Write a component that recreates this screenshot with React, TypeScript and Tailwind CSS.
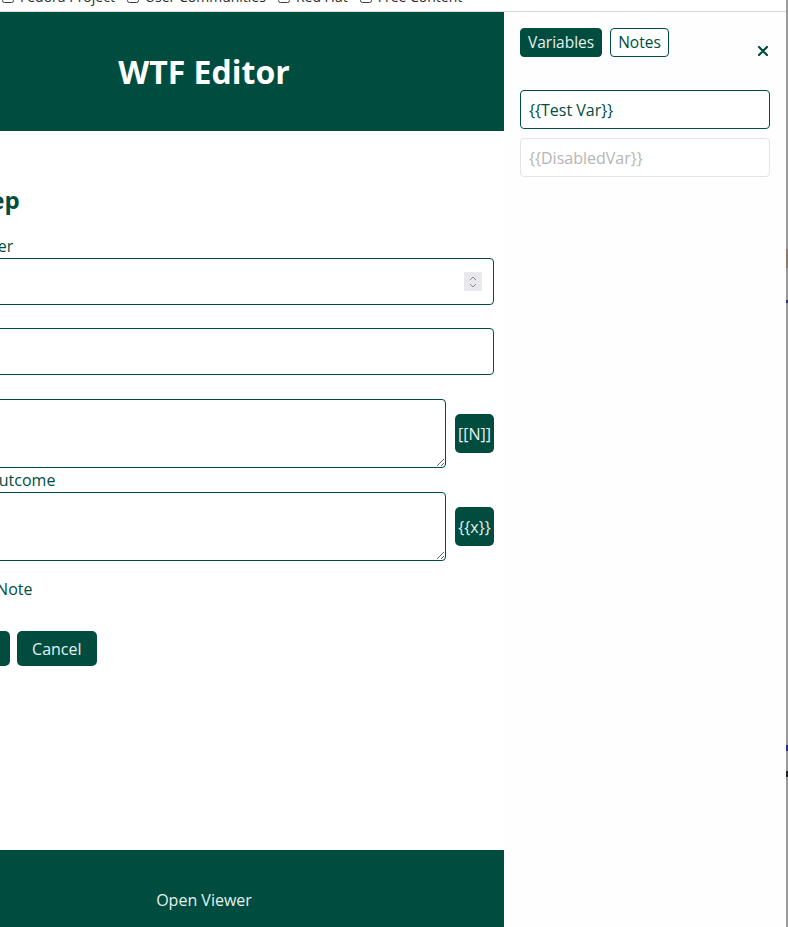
import React, { useState } from 'react';

const GREEN = '#004d40';

const Bookmark: React.FC<{ label: string }> = ({ label }) => (
  <div className="flex items-center gap-[6px] shrink-0">
    <svg width="12" height="12" viewBox="0 0 12 12" className="shrink-0">
      <rect x="0.5" y="1.5" width="11" height="10" rx="2" fill="none" stroke="#3a3a3a" strokeWidth="1" />
      <line x1="0.5" y1="4.5" x2="11.5" y2="4.5" stroke="#3a3a3a" strokeWidth="1" />
    </svg>
    <span>{label}</span>
  </div>
);

const ActionButton: React.FC<{ label: string }> = ({ label }) => (
  <button
    type="button"
    className="w-[39px] h-[39px] shrink-0 rounded-[5px] bg-[#004d40] text-[#e6f0ee] text-[16px] flex items-center justify-center leading-none"
  >
    {label}
  </button>
);

const App: React.FC = () => {
  const [tab, setTab] = useState<'vars' | 'notes'>('vars');
  const [vars] = useState([
    { id: 1, name: '{{Test Var}}', disabled: false },
    { id: 2, name: '{{DisabledVar}}', disabled: true },
  ]);

  return (
    <div className="w-[788px] h-[927px] overflow-hidden flex bg-white font-['Open_Sans',sans-serif]">
      <div className="w-[786px] flex flex-col">
        {/* bookmarks strip, mostly scrolled out of view */}
        <div className="h-[12px] overflow-hidden border-b border-[#d8d8d8] shrink-0">
          <div className="flex gap-[12px] pl-[2px] -mt-[12px] text-[14px] leading-[18px] text-[#2b2b2b]">
            <Bookmark label="Fedora Project" />
            <Bookmark label="User Communities" />
            <Bookmark label="Red Hat" />
            <Bookmark label="Free Content" />
          </div>
        </div>

        <div className="flex flex-1 min-h-0">
          {/* editor column, wider than its visible part */}
          <div className="w-[504px] shrink-0 overflow-hidden">
            <div className="w-[600px] -ml-[96px] flex flex-col">
              <header className="h-[119px] bg-[#004d40] flex items-center justify-center">
                <h1 className="text-[32px] font-bold text-white">WTF Editor</h1>
              </header>

              <form className="h-[719px] pl-[10px] pr-[10px] pt-[52px] text-[#004d40]">
                <h2 className="text-[24px] font-bold leading-[34px] mb-[17px]">Edit Step</h2>

                <label className="block text-[16px] leading-[24px]">Step Number</label>
                <div className="relative">
                  <input
                    type="number"
                    className="block w-full h-[47px] border border-[#004d40] rounded-[4px] px-3 text-[16px] outline-none [appearance:textfield] [&::-webkit-inner-spin-button]:appearance-none"
                  />
                  <div className="absolute right-[12px] top-[14px] w-[18px] h-[19px] bg-[#e9e9ed] flex flex-col items-center justify-center gap-[2px]">
                    <svg width="8" height="5" viewBox="0 0 8 5">
                      <path d="M1 4 L4 1 L7 4" fill="none" stroke="#8a8a95" strokeWidth="1" />
                    </svg>
                    <svg width="8" height="5" viewBox="0 0 8 5">
                      <path d="M1 1 L4 4 L7 1" fill="none" stroke="#8a8a95" strokeWidth="1" />
                    </svg>
                  </div>
                </div>

                <label className="block text-[16px] leading-[23px]">Title</label>
                <input
                  type="text"
                  className="block w-full h-[47px] border border-[#004d40] rounded-[4px] px-3 text-[16px] outline-none"
                />

                <label className="block text-[16px] leading-[24px]">Action</label>
                <div className="flex items-center gap-[9px]">
                  <textarea className="flex-1 h-[69px] border border-[#004d40] rounded-[4px] px-3 py-2 text-[16px] outline-none" />
                  <ActionButton label="[[N]]" />
                </div>

                <label className="block text-[16px] leading-[24px]">Expected Outcome</label>
                <div className="flex items-center gap-[9px]">
                  <textarea className="flex-1 h-[69px] border border-[#004d40] rounded-[4px] px-3 py-2 text-[16px] outline-none" />
                  <ActionButton label="{{x}}" />
                </div>

                <label className="flex items-center gap-[4px] mt-[16px] text-[16px] leading-[24px]">
                  <input type="checkbox" className="w-[13px] h-[13px]" />
                  Attach a Note
                </label>

                <div className="flex gap-[7px] mt-[30px]">
                  <button type="button" className="h-[35px] px-[12px] rounded-[5px] bg-[#004d40] text-[#e6f0ee] text-[16px]">
                    Save Step
                  </button>
                  <button type="button" className="h-[35px] px-[15px] rounded-[5px] bg-[#004d40] text-[#e6f0ee] text-[16px]">
                    Cancel
                  </button>
                </div>
              </form>

              <footer className="h-[100px] bg-[#004d40] flex items-center justify-center">
                <span className="text-[16px] text-[#e6f0ee]">Open Viewer</span>
              </footer>
            </div>
          </div>

          {/* side panel */}
          <aside className="flex-1 bg-[#fefefe] px-[16px] pt-[16px]">
            <div className="flex items-start">
              <div className="flex gap-[8px]">
                <button
                  onClick={() => setTab('vars')}
                  className={
                    tab === 'vars'
                      ? 'h-[29px] px-[7px] rounded-[4px] border border-[#004d40] bg-[#004d40] text-[#e6f0ee] text-[15.5px] leading-none'
                      : 'h-[29px] px-[7px] rounded-[4px] border border-[#004d40] bg-white text-[#004d40] text-[15.5px] leading-none'
                  }
                >
                  Variables
                </button>
                <button
                  onClick={() => setTab('notes')}
                  className={
                    tab === 'notes'
                      ? 'h-[29px] px-[7px] rounded-[4px] border border-[#004d40] bg-[#004d40] text-[#e6f0ee] text-[15.5px] leading-none'
                      : 'h-[29px] px-[7px] rounded-[4px] border border-[#004d40] bg-white text-[#004d40] text-[15.5px] leading-none'
                  }
                >
                  Notes
                </button>
              </div>
              <button className="ml-auto mt-[18px] mr-[2px]" aria-label="close">
                <svg width="10" height="10" viewBox="0 0 10 10">
                  <path d="M1 1 L9 9 M9 1 L1 9" stroke={GREEN} strokeWidth="2.2" strokeLinecap="round" />
                </svg>
              </button>
            </div>

            <div className="flex flex-col gap-[9px] mt-[33px]">
              {vars.map((v) => (
                <input
                  key={v.id}
                  defaultValue={v.name}
                  disabled={v.disabled}
                  className={
                    v.disabled
                      ? 'w-[250px] h-[39px] border border-[#e4e4e4] rounded-[4px] px-[8px] text-[16px] text-[#b5b5b5] bg-white'
                      : 'w-[250px] h-[39px] border border-[#004d40] rounded-[4px] px-[8px] text-[16px] text-[#004d40] bg-white outline-none'
                  }
                />
              ))}
            </div>
          </aside>
        </div>
      </div>

      {/* window edge */}
      <div className="w-[2px] bg-[#9a9a9a] flex flex-col">
        <div className="h-[249px]" />
        <div className="h-[19px] bg-[#8a7a6e]" />
        <div className="h-[32px]" />
        <div className="h-[3px] bg-[#2a2a9a]" />
        <div className="h-[442px]" />
        <div className="h-[6px] bg-[#2a2a9a]" />
        <div className="h-[20px]" />
        <div className="h-[6px] bg-[#222]" />
      </div>
    </div>
  );
};

export default App;
